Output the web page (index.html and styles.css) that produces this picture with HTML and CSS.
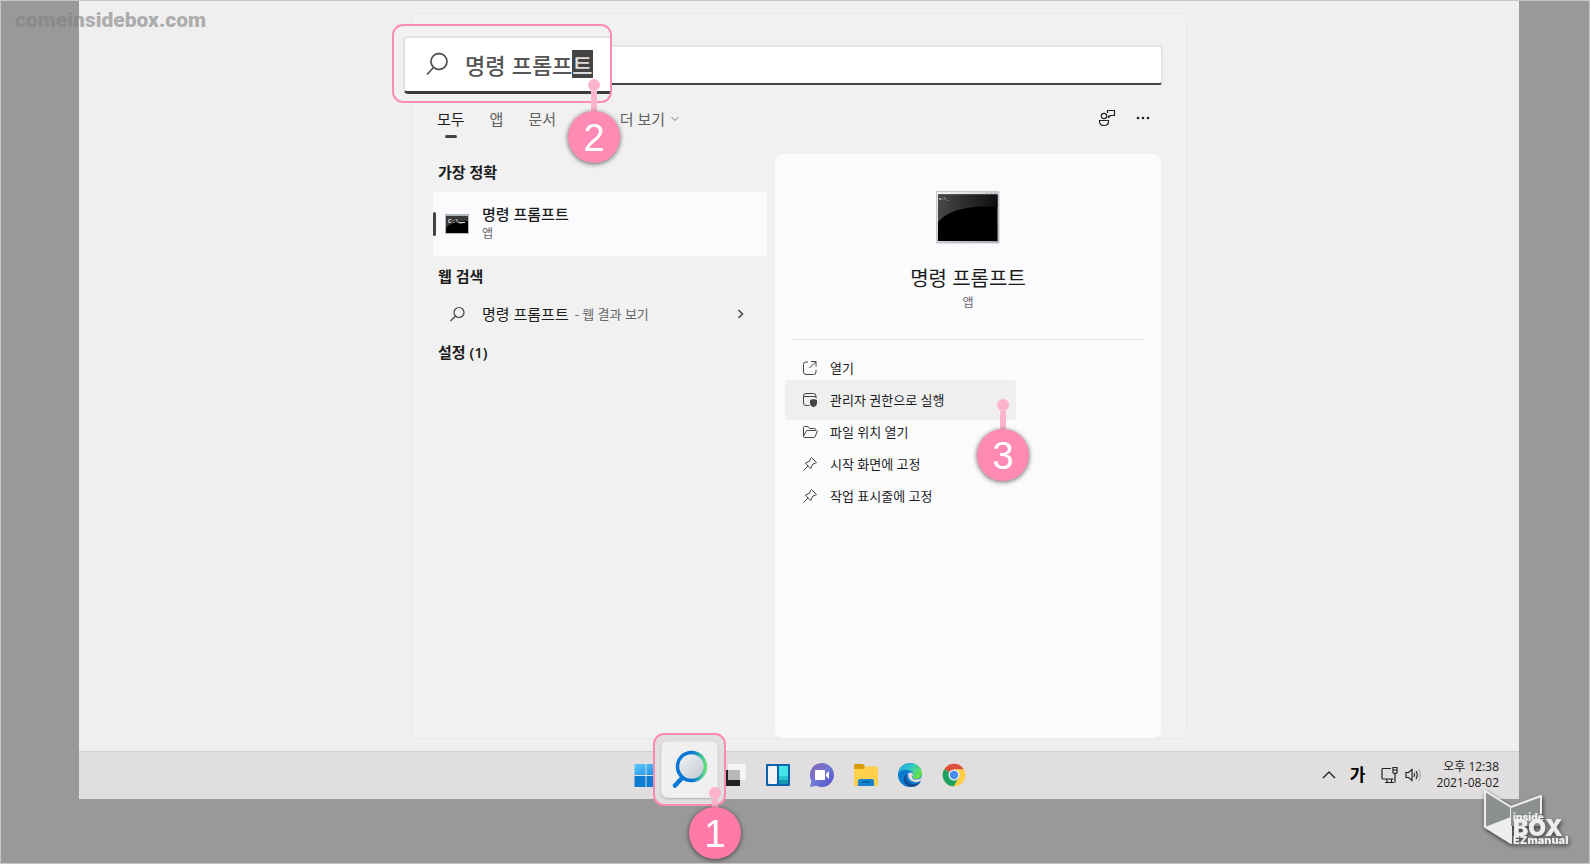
FILE: index.html
```
<!DOCTYPE html>
<html lang="ko">
	<head>
		<meta charset="UTF-8" />
		<meta name="viewport" content="width=device-width, initial-scale=1.0" />
		<title>명령 프롬프트</title>
		<link rel="stylesheet" href="styles.css">
	</head>
	<body>
		<div class="page">
			<div class="watermark">comeinsidebox.com</div>

			<div class="desktop">
				<main class="search-panel">
					<div class="search-bar">
						<div class="callout callout-search">
							<div class="zoomed-bar">
								<label for="query">
									<svg width="24" height="24" viewBox="0 0 24 24" fill="none" stroke="#555" stroke-width="1.800" role="img" aria-label="검색">
										<circle cx="13" cy="9.500" r="8" />
										<path d="M7.500 15.500 1 22.500" />
									</svg>
								</label>
								<input type="text" id="query" value="명령 프롬프트" />
							</div>
						</div>
						<div class="pin pin-two"><i class="dot"></i><i class="stem"></i><b>2</b></div>
					</div>

					<div class="toolbar">
						<nav class="tabs">
							<button type="button" class="tab active">모두</button>
							<button type="button" class="tab">앱</button>
							<button type="button" class="tab">문서</button>
							<button type="button" class="tab">웹</button>
							<button type="button" class="tab">더 보기
								<svg width="8" height="6" viewBox="0 0 8 6" fill="none" stroke="#777"><path d="M.5 1 4 4.500 7.500 1" /></svg>
							</button>
						</nav>
						<div class="tools">
							<button type="button" aria-label="피드백">
								<svg width="18" height="18" viewBox="0 0 18 18" fill="none" stroke="#222" stroke-width="1.200">
									<circle cx="6" cy="7" r="2.700" />
									<path d="M1.500 11.500h9v1c0 2.500-2 4-4.500 4s-4.500-1.500-4.500-4z" />
									<path d="M9.500 4V1.500h7v5h-4l-2 2v-2" stroke-linejoin="round" />
								</svg>
							</button>
							<button type="button" aria-label="옵션">
								<svg width="14" height="4" viewBox="0 0 14 4" fill="#222"><circle cx="2" cy="2" r="1.300" /><circle cx="7" cy="2" r="1.300" /><circle cx="12" cy="2" r="1.300" /></svg>
							</button>
						</div>
					</div>

					<div class="columns">
						<section class="results">
							<h2>가장 정확</h2>
							<button type="button" class="best-match">
								<svg class="result-icon" width="24" height="20" viewBox="0 0 24 20">
									<path d="M.5.5h23v19H.5z" fill="#000" stroke="#b5bac0" />
									<path d="M0 0h24v2H0z" fill="#aeb6be" />
									<path d="M1 2h22v5Q6 7 1 14z" fill="#3a3a3a" />
									<text x="3" y="9" class="prompt">C:\_</text>
									<path d="M14 8.500h6" stroke="#ddd" />
								</svg>
								<span class="result-text">
									<span class="result-name">명령 프롬프트</span>
									<small>앱</small>
								</span>
							</button>

							<h2>웹 검색</h2>
							<button type="button" class="web-result">
								<svg class="result-icon" width="24" height="16" viewBox="0 0 24 16" fill="none" stroke="#444" stroke-width="1.200">
									<circle cx="14" cy="6.500" r="5" />
									<path d="M10.500 10 5.500 15" />
								</svg>
								<span class="result-name">명령 프롬프트</span>
								<small>- 웹 결과 보기</small>
								<svg class="arrow" width="8" height="10" viewBox="0 0 8 10" fill="none" stroke="#444" stroke-width="1.500"><path d="M1.500 1 5.500 5 1.500 9" /></svg>
							</button>

							<h2>설정 (1)</h2>
						</section>

						<section class="preview">
							<svg class="app-icon" width="64" height="53" viewBox="0 0 64 53">
								<defs>
									<linearGradient id="frame" x1="0" y1="0" x2="1" y2="1">
										<stop offset="0" stop-color="#f4f6f8" />
										<stop offset="1" stop-color="#9da6ae" />
									</linearGradient>
									<linearGradient id="glare" x1="0" y1="0" x2="1" y2="0">
										<stop offset="0" stop-color="#484848" />
										<stop offset="1" stop-color="#0d0d0d" />
									</linearGradient>
								</defs>
								<path d="M.5.500h62.500v51.500H.5z" fill="url(#frame)" stroke="#c3c7cb" />
								<path d="M2 3.500h59.500V50H2z" fill="#000" />
								<path d="M2 3.500h59.500V16Q18 13 2 31z" fill="url(#glare)" />
								<path d="M50 2h2m2 0h2m2 0h2" stroke="#a9b0b8" />
								<text x="3" y="9" class="prompt prompt-small">C:\_</text>
							</svg>
							<h1>명령 프롬프트</h1>
							<p>앱</p>
							<hr>
							<ul class="actions">
								<li>
									<button type="button">
										<svg width="16" height="16" viewBox="0 0 16 16" fill="none" stroke="#444">
											<path d="M6 2H4a2.500 2.500 0 0 0-2.500 2.500V12A2.500 2.500 0 0 0 4 14.500h7.500A2.500 2.500 0 0 0 14 12v-2M9 1.500h5v5M14 1.500 7.500 8" />
										</svg>
										열기
									</button>
								</li>
								<li>
									<button type="button" class="selected">
										<svg width="16" height="16" viewBox="0 0 16 16" fill="none" stroke="#444">
											<path d="M7.500 13.500H4A2.500 2.500 0 0 1 1.500 11V4A2.500 2.500 0 0 1 4 1.500h7.500A2.500 2.500 0 0 1 14 4v2.500M1.500 4.500H14" />
											<path d="M11.500 7 15 8v3c0 2.200-1.500 3.500-3.500 4.200C9.500 14.500 8 13.200 8 11V8z" fill="#444" stroke="none" />
										</svg>
										관리자 권한으로 실행
									</button>
									<div class="pin pin-three"><i class="dot"></i><i class="stem"></i><b>3</b></div>
								</li>
								<li>
									<button type="button">
										<svg width="16" height="16" viewBox="0 0 16 16" fill="none" stroke="#444" stroke-linejoin="round">
											<path d="M1.500 12V3.500a1 1 0 0 1 1-1H6l1.500 2h5a1 1 0 0 1 1 1v1M1.500 12.500 4 7.200a1 1 0 0 1 1-.7h9.500a.7.700 0 0 1 .7 1l-2 5a1.500 1.500 0 0 1-1.400 1H2.500a1 1 0 0 1-1-1z" />
										</svg>
										파일 위치 열기
									</button>
								</li>
								<li>
									<button type="button">
										<svg width="16" height="16" viewBox="0 0 16 16" fill="none" stroke="#444" stroke-linejoin="round">
											<path d="m9.500 1.500 5 5-1.200.8-2.600.9-2 4.300-5.400-5.400 4.400-2 .9-2.500zM6 10l-4.500 4.500" />
										</svg>
										시작 화면에 고정
									</button>
								</li>
								<li>
									<button type="button">
										<svg width="16" height="16" viewBox="0 0 16 16" fill="none" stroke="#444" stroke-linejoin="round">
											<path d="m9.500 1.500 5 5-1.200.8-2.600.9-2 4.300-5.400-5.400 4.400-2 .9-2.500zM6 10l-4.500 4.500" />
										</svg>
										작업 표시줄에 고정
									</button>
								</li>
							</ul>
						</section>
					</div>
				</main>

				<footer class="taskbar">
					<div class="apps">
						<button type="button" aria-label="시작">
							<svg width="24" height="24" viewBox="0 0 24 24">
								<defs>
									<linearGradient id="win" x1="0" y1="0" x2="1" y2="1">
										<stop offset="0" stop-color="#5cc8fa" />
										<stop offset="1" stop-color="#1b8de4" />
									</linearGradient>
								</defs>
								<path d="M.5 1h11v11H.5zM12.500 1h11v11h-11z" fill="url(#win)" />
								<path d="M.5 13h11v11H.5zM12.500 13h11v11h-11z" fill="#0c7bd3" />
							</svg>
						</button>
						<div class="search-app">
							<div class="callout callout-app">
								<button type="button" class="zoomed-app" aria-label="검색">
									<svg width="36" height="38" viewBox="0 0 36 38">
										<defs>
											<linearGradient id="ring" x1="0" y1="0" x2="1" y2="0">
												<stop offset=".55" stop-color="#0a78d4" />
												<stop offset=".8" stop-color="#35b5a4" />
												<stop offset="1" stop-color="#63e07d" />
											</linearGradient>
											<linearGradient id="lens" x1="0" y1="0" x2="1" y2="1">
												<stop offset="0" stop-color="#f5f7f8" />
												<stop offset="1" stop-color="#bcc5cd" />
											</linearGradient>
										</defs>
										<path d="M3 35.500 11 27" stroke="#0a78d4" stroke-width="4.500" stroke-linecap="round" />
										<circle cx="19.500" cy="16.500" r="14" fill="url(#lens)" stroke="url(#ring)" stroke-width="3.500" />
									</svg>
								</button>
							</div>
							<div class="pin pin-one"><i class="dot"></i><i class="stem"></i><b>1</b></div>
						</div>
						<button type="button" aria-label="작업 보기">
							<svg width="24" height="24" viewBox="0 0 24 24">
								<path d="M0 7h18v16H0z" fill="#222" />
								<path d="M6 1h18v16H6z" fill="#f5f5f5" />
								<path d="M6 7h12v10H6z" fill="#b9b9b9" />
							</svg>
						</button>
						<button type="button" aria-label="위젯">
							<svg width="24" height="24" viewBox="0 0 24 24">
								<rect y="1" width="24" height="22" rx="1" fill="#0f62ae" />
								<rect x="2" y="3" width="9" height="18" rx="1" fill="#f3f3f5" />
								<path d="M13 3h9v10h-9z" fill="#43e5e7" />
								<path d="M13 13h9v4h-9z" fill="#2ac4cf" />
								<path d="M13 17h9v4h-9z" fill="#1597b5" />
							</svg>
						</button>
						<button type="button" aria-label="채팅">
							<svg width="24" height="24" viewBox="0 0 24 24">
								<defs>
									<linearGradient id="chat" x1="0" y1="0" x2="1" y2="1">
										<stop offset="0" stop-color="#8b63ae" />
										<stop offset=".5" stop-color="#7079d8" />
										<stop offset="1" stop-color="#4f4fc2" />
									</linearGradient>
								</defs>
								<path d="M12 0a12 12 0 1 1-5.500 22.700L0 24l1.500-6A12 12 0 0 1 12 0z" fill="url(#chat)" />
								<rect x="5" y="7" width="10" height="10" rx="1" fill="#fff" />
								<path d="M16 11l3-3v8l-3-3z" fill="#fff" />
							</svg>
						</button>
						<button type="button" aria-label="파일 탐색기">
							<svg width="24" height="24" viewBox="0 0 24 24">
								<path d="M0 2a1 1 0 0 1 1-1h8l2 2.500V8H0z" fill="#d99b09" />
								<path d="M0 6h9l2-2.500h13V23H0z" fill="#ffd04c" />
								<path d="M4 23v-5a2 2 0 0 1 2-2h12a2 2 0 0 1 2 2v5z" fill="#1583d0" />
								<path d="M8 19h8" stroke="#0b5b9b" stroke-width="1.500" />
							</svg>
						</button>
						<button type="button" aria-label="Edge">
							<svg width="24" height="24" viewBox="0 0 24 24">
								<defs>
									<linearGradient id="wave" x1="0" y1="0" x2="1" y2=".5">
										<stop offset="0" stop-color="#1e9ed8" />
										<stop offset=".5" stop-color="#2fc6cf" />
										<stop offset="1" stop-color="#66e04f" />
									</linearGradient>
								</defs>
								<circle cx="12" cy="12" r="12" fill="#0c7cd0" />
								<path d="M0 11C1 4 6 0 12 0c7 0 12 5 12 10 0 4-3 6-6 6-4 0-4-1.500-3-3 1-2-.5-4.500-3-5.500C8 6 2 7 0 11z" fill="url(#wave)" />
								<path d="M9 11c-2 5 1 10 7 10 3 0 5-1.500 7-3-3 6-9 7-13 5C4 20 5 13 9 11z" fill="#134e96" />
								<path d="M10 11c1-1.500 3-2 4.500-.5.8 1.200.5 2-.2 3C13.500 15 15 16.500 18 16.500c3 0 5-1 6-3.500 0 2-.5 3.500-1.500 5-5 3-13 0-12.500-7z" fill="#e0dede" />
							</svg>
						</button>
						<button type="button" aria-label="Chrome">
							<svg width="24" height="24" viewBox="0 0 24 24">
								<circle cx="12" cy="12" r="11.300" fill="#ffce44" />
								<path d="M12 12 2.200 6.350A11.300 11.300 0 0 1 21.800 6.350L12 6.500z" fill="#dc4f41" />
								<path d="M12 12 2.200 6.350A11.300 11.300 0 0 0 12 23.300L16.800 14.700z" fill="#1da261" />
								<path d="M12 6.500h9.900A11.300 11.300 0 0 1 12 23.300l4.800-8.600z" fill="#ffce44" />
								<circle cx="12" cy="12" r="5.500" fill="#f1f1f1" />
								<circle cx="12" cy="12" r="4.200" fill="#4a8af4" />
							</svg>
						</button>
					</div>

					<div class="tray">
						<button type="button" class="overflow" aria-label="숨겨진 아이콘 표시">
							<svg width="14" height="8" viewBox="0 0 14 8" fill="none" stroke="#222" stroke-width="1.400"><path d="M1 7l6-6 6 6" /></svg>
						</button>
						<button type="button" class="ime">가</button>
						<button type="button" class="status" aria-label="네트워크 및 볼륨">
							<svg width="17" height="18" viewBox="0 0 17 18" fill="none" stroke="#222" stroke-width="1.200">
								<path d="M10 2.500H2a1 1 0 0 0-1 1V12a1 1 0 0 0 1 1h10.500M4 16.500h9M6 13v3M10.500 13v3" />
								<path d="M12 1.500h4v5l-1 1h-2l-1-1zM12 4h4M14 7.500v9" />
							</svg>
							<svg width="17" height="14" viewBox="0 0 17 14" fill="none" stroke="#222" stroke-width="1.200">
								<path d="M1 4.500h2.500L7 1.500v11L3.500 9.500H1zM9 5q1.200 2 0 4M11 3q2.500 4 0 8" />
								<path d="M13.500 1q3.500 6 0 12" stroke="#aaa" />
							</svg>
						</button>
						<button type="button" class="clock">
							<time datetime="12:38">오후 12:38</time>
							<time datetime="2021-08-02">2021-08-02</time>
						</button>
					</div>
				</footer>
			</div>

			<svg class="logo" width="96" height="64" viewBox="0 0 96 64" role="img" aria-label="inside BOX EZmanual">
				<path d="M4 3 30 19v36L4 39z" fill="#8b8f8e" stroke="#eee" stroke-width="2" stroke-linejoin="round" />
				<path d="M30 19 60 8v30H30z" fill="#8b8f8e" />
				<path d="M30 19 60 8v18" fill="none" stroke="#eee" stroke-width="2" stroke-linejoin="round" />
				<path d="M4 39 30 29v27z" fill="#eee" />
				<text x="32" y="33" class="logo-small logo-top">inside</text>
				<text x="32" y="48" class="logo-large">BOX</text>
				<text x="32" y="56" class="logo-small">EZmanual</text>
			</svg>
		</div>

		<script>
			// keep the last syllable highlighted, as while it is being composed
			const query = document.getElementById('query');
			query.focus();
			query.setSelectionRange(query.value.length - 1, query.value.length);
		</script>
	</body>
</html>
```

FILE: styles.css
```
* {
	box-sizing: border-box;
}
body {
	margin: 0;
	font-family: "Open Sans", "Noto Sans CJK KR", sans-serif;
	font-size: 15px;
	line-height: 20px;
	color: #1b1b1b;
}
button {
	margin: 0;
	padding: 0;
	border: none;
	background: none;
	font: inherit;
	color: inherit;
	text-align: left;
	cursor: pointer;
}
svg {
	display: block;
	flex-shrink: 0;
}
h1,
h2,
p,
ul {
	margin: 0;
	padding: 0;
	list-style: none;
}
small {
	font-size: 13px;
	color: #666;
}
.page {
	position: relative;
	display: flex;
	min-height: 100vh;
	padding: 0 70px 64px 78px;
	border: 1px solid #c6c6c6;
	background: #999;
}
.watermark {
	position: absolute;
	top: 7px;
	left: 14px;
	font-family: Roboto, sans-serif;
	font-size: 21px;
	font-weight: 900;
	line-height: 24px;
	color: rgba(128, 128, 128, 0.6);
}
.desktop {
	flex: 1;
	display: flex;
	flex-direction: column;
	background: #efefef;
}

/* search panel */
.search-panel {
	flex: 1;
	display: flex;
	flex-direction: column;
	width: 100%;
	max-width: 776px;
	margin: 12px auto;
	padding: 31px 23px 0 21px;
	border: 1px solid #e7e7e7;
	border-radius: 8px;
	background: #f1f1f1;
}
.search-bar {
	position: relative;
	height: 40px;
	border: 2px solid #e4e4e4;
	border-bottom-color: #444;
	border-radius: 4px;
	background: #fff;
}
.callout {
	position: absolute;
	border: 2px solid #ff8ab4;
	border-radius: 11px;
	overflow: hidden;
}
.callout-search {
	top: -23px;
	left: -43px;
	width: 220px;
	padding: 10px 0 7px 9px;
	background: #f1f1f1;
}
.zoomed-bar {
	display: flex;
	align-items: center;
	height: 58px;
	padding: 0 0 2px 21px;
	border: 2px solid #e2e2e2;
	border-right: none;
	border-bottom: 3px solid #3c3c3c;
	border-radius: 5px 0 0 5px;
	background: #fff;
}
.zoomed-bar input {
	flex: 1;
	min-width: 0;
	margin-left: 15px;
	padding: 0;
	border: none;
	outline: none;
	background: none;
	font-family: "Noto Sans CJK KR", sans-serif;
	font-size: 22px;
	font-weight: 500;
	line-height: 28px;
	color: #555;
}
.zoomed-bar input::selection {
	background: #444;
	color: #ddd;
}
.toolbar {
	display: flex;
	justify-content: space-between;
	margin-top: 24px;
	padding: 0 13px 0 4px;
}
.tabs {
	display: flex;
	gap: 25px;
	height: 29px;
}
.tab {
	display: flex;
	align-items: center;
	gap: 6px;
	height: 20px;
	white-space: nowrap;
	color: #606060;
}
.tab.active {
	flex-direction: column;
	height: 29px;
	color: #1b1b1b;
}
.tab.active::after {
	content: "";
	width: 12px;
	height: 3px;
	border-radius: 2px;
	background: #444;
}
.tools {
	display: flex;
	align-items: center;
	gap: 20px;
	height: 18px;
}
.columns {
	flex: 1;
	display: grid;
	grid-template-columns: 334fr 386fr;
	gap: 8px;
	margin-top: 16px;
	padding-right: 2px;
}

/* results */
.results {
	display: flex;
	flex-direction: column;
	gap: 10px;
	padding-top: 8px;
}
.results h2 {
	padding-left: 5px;
	font-size: 15px;
	font-weight: 600;
	line-height: 20px;
}
.result-name {
	font-size: 15px;
}
.best-match,
.web-result {
	display: flex;
	align-items: center;
	border-radius: 4px;
}
.best-match {
	height: 64px;
	background: #fbfbfd;
}
.best-match::before {
	content: "";
	width: 3px;
	height: 24px;
	border-radius: 2px;
	background: #444;
}
.best-match .result-icon {
	margin: 0 13px 0 9px;
}
.best-match .result-name {
	font-weight: 500;
}
.result-text {
	display: flex;
	flex-direction: column;
}
.best-match small {
	font-size: 12px;
}
.web-result {
	height: 36px;
	padding: 0 22px 0 12px;
}
.web-result .result-icon {
	margin-right: 13px;
}
.web-result small {
	margin-left: 6px;
}
.arrow {
	margin-left: auto;
}
.prompt {
	font-family: "Liberation Mono", monospace;
	font-size: 6px;
	font-weight: bold;
	fill: #e8e8e8;
}
.prompt-small {
	font-size: 4px;
}

/* preview */
.preview {
	display: flex;
	flex-direction: column;
	padding: 37px 16px 0;
	border-radius: 8px;
	background: #fbfbfd;
	text-align: center;
}
.app-icon {
	align-self: center;
}
.preview h1 {
	margin-top: 21px;
	font-size: 20px;
	font-weight: 400;
	line-height: 28px;
}
.preview p {
	font-size: 12px;
	line-height: 20px;
	color: #666;
}
.preview hr {
	width: 100%;
	margin: 26px 0 12px;
	border: none;
	border-top: 1px solid #e3e3e5;
}
.actions {
	margin-left: -6px;
	font-size: 13px;
}
.actions li {
	position: relative;
	display: flex;
	align-items: center;
	width: 231px;
	height: 32px;
}
.actions button {
	flex: 1;
	display: flex;
	align-items: center;
	gap: 12px;
	height: 32px;
	padding-left: 17px;
	border-radius: 4px;
}
.actions .selected {
	height: 40px;
	background: #efefef;
}

/* numbered pins */
.pin {
	position: absolute;
	z-index: 2;
	display: flex;
	flex-direction: column;
	align-items: center;
	width: 52px;
}
.pin .dot {
	width: 12px;
	height: 12px;
	border-radius: 50%;
	background: #fcb4ce;
}
.pin .stem {
	width: 6px;
	height: 20px;
	background: #fcb4ce;
}
.pin b {
	width: 52px;
	height: 52px;
	border-radius: 50%;
	background: #ff8ab4;
	box-shadow: 0 1px 5px rgba(0, 0, 0, 0.6);
	font-family: "Liberation Sans", Arial, sans-serif;
	font-size: 38px;
	font-weight: 400;
	line-height: 54px;
	text-align: center;
	color: #fff;
}
.pin-two {
	top: 32px;
	left: 133px;
}
.pin-three {
	top: 15px;
	right: -13px;
	z-index: 3;
}
.pin-three .stem {
	height: 18px;
}
.pin-one {
	top: 34px;
	left: 21px;
}
.pin-one .stem {
	height: 8px;
}
.pin-one b {
	background: #ff7aa9;
}

/* taskbar */
.taskbar {
	display: grid;
	grid-template-columns: 1fr auto 1fr;
	align-items: center;
	height: 48px;
	padding: 0 20px 2px 22px;
	border-top: 1px solid #d0cecf;
	background: #e0dede;
}
.apps {
	grid-column: 2;
	display: flex;
}
.apps > button,
.search-app {
	position: relative;
	display: flex;
	align-items: center;
	justify-content: center;
	width: 44px;
	height: 44px;
}
.callout-app {
	z-index: 1;
	top: -20px;
	left: -15px;
	padding: 6px;
	background: #e0dede;
}
.zoomed-app {
	display: flex;
	align-items: center;
	justify-content: center;
	width: 57px;
	height: 57px;
	border: 1px solid #e6e6e6;
	border-radius: 6px;
	background: #f0f0f0;
	box-shadow: 0 1px 2px rgba(0, 0, 0, 0.2);
}
.tray {
	grid-column: 3;
	justify-self: end;
	display: flex;
	align-items: center;
}
.ime {
	margin: 0 16px 0 14px;
	font-size: 17px;
	font-weight: 700;
	color: #000;
}
.status {
	display: flex;
	align-items: center;
	gap: 7px;
	margin-right: 14px;
}
.clock {
	display: flex;
	flex-direction: column;
	align-items: flex-end;
	font-size: 12px;
	line-height: 16px;
}

.logo {
	position: absolute;
	right: 12px;
	bottom: 11px;
	filter: drop-shadow(1px 2px 2px rgba(0, 0, 0, 0.6));
}
.logo-small,
.logo-large {
	font-family: Inter, sans-serif;
	font-size: 11px;
	font-weight: 900;
	fill: #eee;
}
.logo-top {
	font-size: 10px;
}
.logo-large {
	font-size: 23px;
}
```
